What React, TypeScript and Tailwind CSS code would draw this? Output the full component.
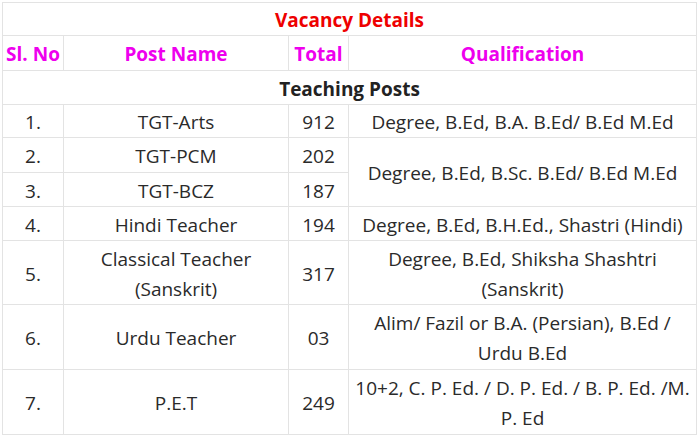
const rows = [
  { no: "1.", post: ["TGT-Arts"], total: "912", qual: ["Degree, B.Ed, B.A. B.Ed/ B.Ed M.Ed"], h: "h-[33px]" },
  { no: "2.", post: ["TGT-PCM"], total: "202", qual: ["Degree, B.Ed, B.Sc. B.Ed/ B.Ed M.Ed"], span: 2, h: "h-[35px]" },
  { no: "3.", post: ["TGT-BCZ"], total: "187", h: "h-[34px]" },
  { no: "4.", post: ["Hindi Teacher"], total: "194", qual: ["Degree, B.Ed, B.H.Ed., Shastri (Hindi)"], h: "h-[34px]" },
  { no: "5.", post: ["Classical Teacher", "(Sanskrit)"], total: "317", qual: ["Degree, B.Ed, Shiksha Shashtri", "(Sanskrit)"], h: "h-[64px]" },
  { no: "6.", post: ["Urdu Teacher"], total: "03", qual: ["Alim/ Fazil or B.A. (Persian), B.Ed /", "Urdu B.Ed"], h: "h-[65px]" },
  { no: "7.", post: ["P.E.T"], total: "249", qual: ["10+2, C. P. Ed. / D. P. Ed. / B. P. Ed. /M.", "P. Ed"], h: "h-[65px]" },
];

function Lines({ lines }: { lines: string[] }) {
  return (
    <>
      {lines.map((l, i) => (
        <span key={i}>
          {i > 0 && <br />}
          {l}
        </span>
      ))}
    </>
  );
}

export default function App() {
  const cell = "border border-[#e3e3e3] text-center align-middle px-0 pt-[2px] pb-0";
  return (
    <div className="w-[699px] h-[441px] bg-white overflow-hidden pt-[2px] pl-[2px] font-['Open_Sans','Noto_Sans',sans-serif] text-[19px] leading-[30px] text-[#2a2a2a]">
      <table className="border-collapse w-[694px] table-fixed">
        <colgroup>
          <col className="w-[61px]" />
          <col className="w-[225px]" />
          <col className="w-[60px]" />
          <col className="w-[348px]" />
        </colgroup>
        <tbody>
          <tr className="h-[33px]">
            <td colSpan={4} className={`${cell} font-bold text-[#ee0000]`}>
              Vacancy Details
            </td>
          </tr>
          <tr className="h-[35px] font-bold text-[#ee00ee]">
            <td className={`${cell} whitespace-nowrap`}>Sl. No</td>
            <td className={cell}>Post Name</td>
            <td className={cell}>Total</td>
            <td className={cell}>Qualification</td>
          </tr>
          <tr className="h-[34px]">
            <td colSpan={4} className={`${cell} font-bold text-[#222]`}>
              Teaching Posts
            </td>
          </tr>
          {rows.map((r) => (
            <tr key={r.no} className={r.h}>
              <td className={cell}>{r.no}</td>
              <td className={cell}>
                <Lines lines={r.post} />
              </td>
              <td className={cell}>{r.total}</td>
              {r.qual && (
                <td rowSpan={r.span ?? 1} className={`${cell} whitespace-nowrap`}>
                  <Lines lines={r.qual} />
                </td>
              )}
            </tr>
          ))}
        </tbody>
      </table>
    </div>
  );
}
